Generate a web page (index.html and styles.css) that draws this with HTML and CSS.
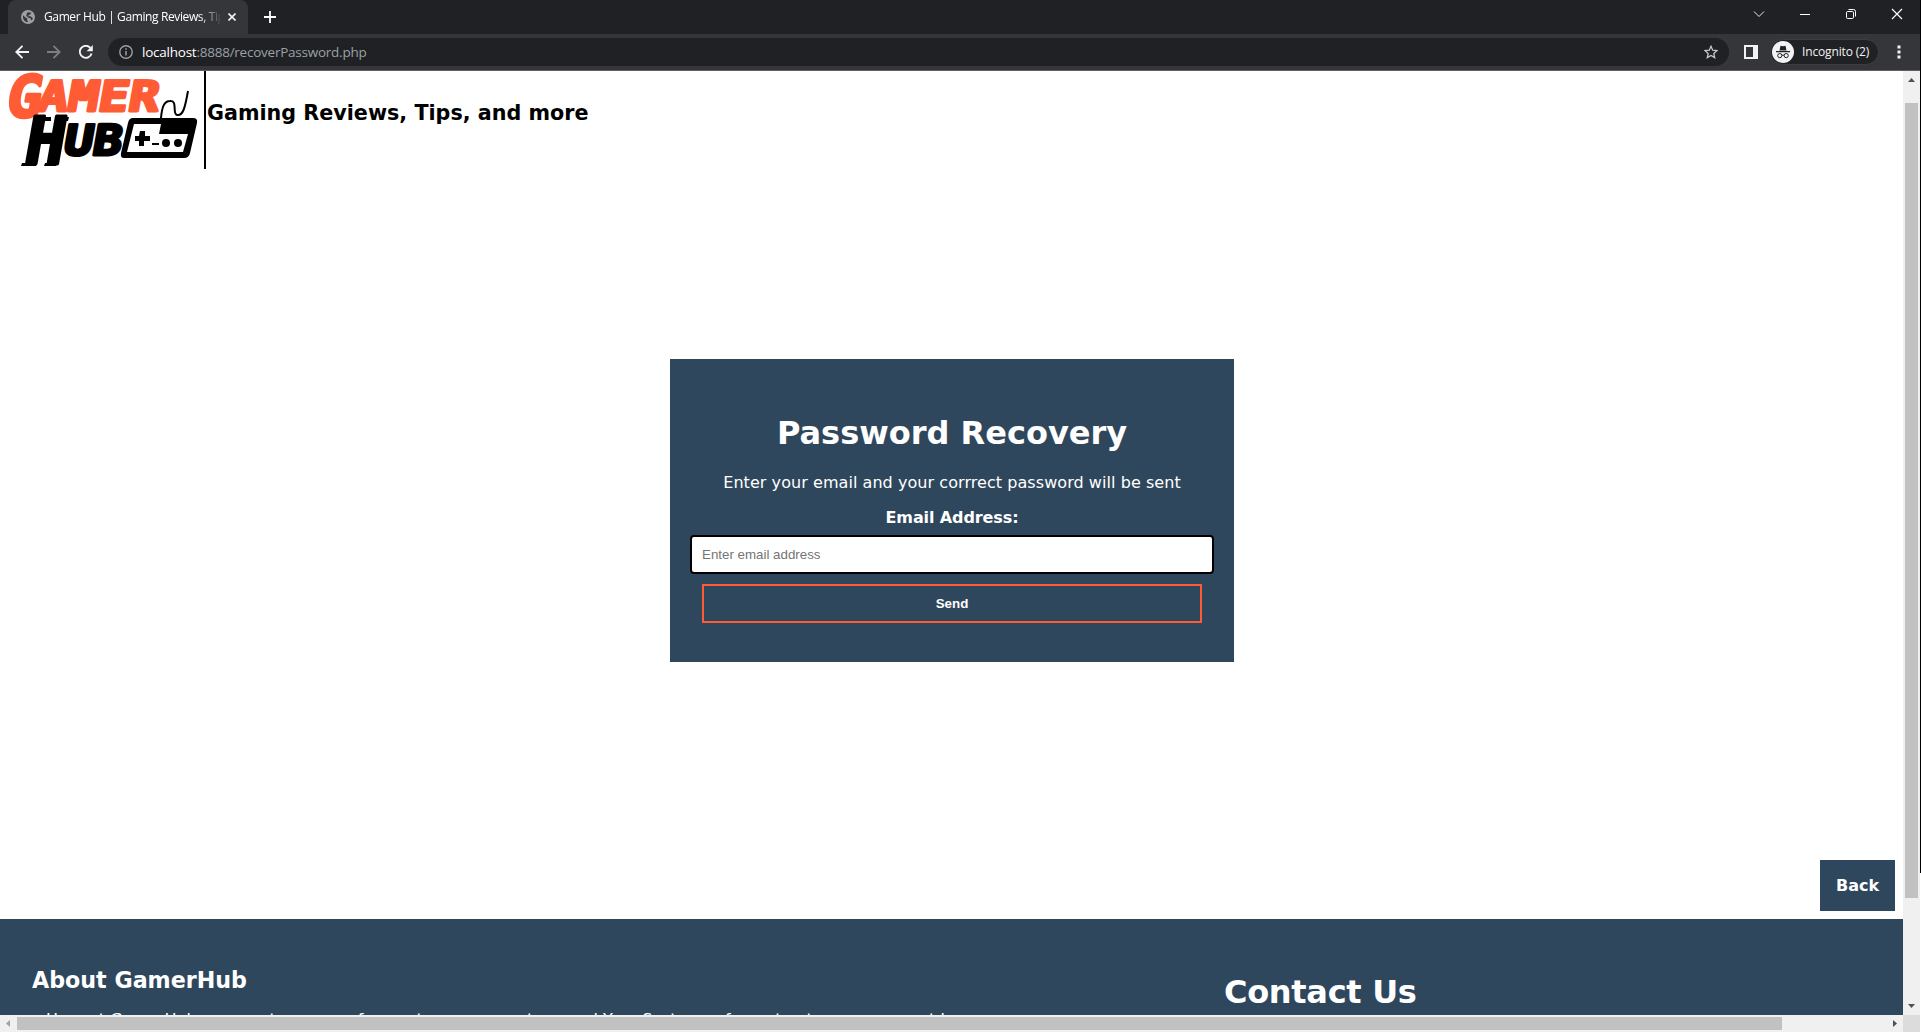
FILE: index.html
```html
<!DOCTYPE html>
<html lang="en">
<head>
<meta charset="utf-8">
<title>Gamer Hub | Gaming Reviews, Tips, and more</title>
<link rel="stylesheet" href="styles.css">
</head>
<body>
<div class="window">
  <div class="tabstrip">
    <div class="tab">
      <svg class="globe" width="14" height="14" viewBox="0 0 14 14"><circle cx="7" cy="7" r="7" fill="#9aa0a6"/><path d="M2 5.2L5 8l1.2.3v2.4L7.3 12C4 12.400 1.500 9.500 2 5.200zM6.300 2.200l4.200.5L9 4.400 7.500 5.500 6 6.200h3.500L12 8.500 10.500 10.500 9.300 8.300 7 7.500 5.200 6z" fill="#35363a"/></svg>
      <span class="tab-title">Gamer Hub | Gaming Reviews, Tip</span>
      <svg class="tab-close" width="8" height="8" viewBox="0 0 8 8"><path d="M.5.5l7 7M7.500.5l-7 7" stroke="#f1f3f4" stroke-width="1.600"/></svg>
    </div>
    <svg class="newtab" width="12" height="12" viewBox="0 0 12 12"><path d="M6 0v12M0 6h12" stroke="#fff" stroke-width="1.800"/></svg>
    <div class="controls">
      <svg width="12" height="12" viewBox="0 0 12 12"><path d="M1 3.500l5 5 5-5" fill="none" stroke="#e8eaed"/></svg>
      <svg width="12" height="12" viewBox="0 0 12 12"><path d="M1 6.500h10" stroke="#fff"/></svg>
      <svg width="12" height="12" viewBox="0 0 12 12"><rect x="1.500" y="3.500" width="7" height="7" rx="1.200" fill="none" stroke="#fff"/><path d="M3.500 1.500h5q2 0 2 2v5" fill="none" stroke="#fff"/></svg>
      <svg width="12" height="12" viewBox="0 0 12 12"><path d="M1 1l10 10M11 1L1 11" stroke="#fff" stroke-width="1.200"/></svg>
    </div>
  </div>
  <div class="toolbar">
    <svg class="nav" width="14" height="14" viewBox="0 0 14 14"><path d="M14 7H1.500M7.500.8L1.300 7l6.200 6.200" fill="none" stroke="#f1f3f4" stroke-width="1.800"/></svg>
    <svg class="nav" width="14" height="14" viewBox="0 0 14 14"><path d="M0 7h12.500M6.500.8L12.700 7l-6.200 6.200" fill="none" stroke="#7d7e82" stroke-width="1.800"/></svg>
    <svg class="nav" width="14" height="14" viewBox="0 0 14 14"><path d="M12.600 8.500A6 6 0 1 1 11.300 2.800" fill="none" stroke="#f1f3f4" stroke-width="1.900"/><path d="M13.800 0v6.200H7.600z" fill="#f1f3f4"/></svg>
    <div class="address">
      <svg width="14" height="14" viewBox="0 0 14 14"><circle cx="7" cy="7" r="6.200" fill="none" stroke="#9aa0a6" stroke-width="1.400"/><path d="M7 6v4.500M7 3.300v1.500" stroke="#9aa0a6" stroke-width="1.500"/></svg>
      <span class="url"><b>localhost</b>:8888/recoverPassword.php</span>
      <svg class="star" width="14" height="14" viewBox="0 0 14 14"><path d="M7 1.300l1.700 3.900 4.300.4-3.200 2.800.9 4.200L7 10.400l-3.700 2.200.9-4.200L1 5.600l4.300-.4z" fill="none" stroke="#c4c7ca" stroke-width="1.300"/></svg>
    </div>
    <svg class="panel" width="14" height="14" viewBox="0 0 14 14"><path fill-rule="evenodd" d="M0 0h14v14H0zM2 2v10h7V2z" fill="#f1f3f4"/></svg>
    <div class="incognito">
      <svg width="22" height="22" viewBox="0 0 22 22"><circle cx="11" cy="11" r="11" fill="#f1f3f4"/><path d="M7.500 9.500l1-4.700q2.500.8 5 0l1 4.700zM4 10h14v1.200H4z" fill="#202124"/><g fill="none" stroke="#202124"><circle cx="7.800" cy="14.600" r="2.100"/><circle cx="14.200" cy="14.600" r="2.100"/><path d="M9.900 14.200h2.200"/></g></svg>
      <span>Incognito (2)</span>
    </div>
    <svg class="dots" width="4" height="14" viewBox="0 0 4 14"><path d="M.5.5h3v3h-3zM.5 5.500h3v3h-3zM.5 10.500h3v3h-3z" fill="#f1f3f4"/></svg>
  </div>
  <div class="viewport">
    <div class="page">
      <header class="site-header">
        <svg class="logo" width="204" height="98" viewBox="0 0 204 98">
          <g class="logo-orange">
            <text transform="translate(4 46) skewX(-10)" font-size="58" textLength="35" lengthAdjust="spacingAndGlyphs">G</text>
            <text transform="translate(36 40) skewX(-10)" font-size="42" textLength="121" lengthAdjust="spacingAndGlyphs">AMER</text>
          </g>
          <g class="logo-black">
            <text transform="translate(22 93) skewX(-10)" font-size="66" textLength="40" lengthAdjust="spacingAndGlyphs">H</text>
            <text transform="translate(62 84) skewX(-10)" font-size="42" textLength="58" lengthAdjust="spacingAndGlyphs">UB</text>
          </g>
          <path d="M22 92h15l-1 3H21zM45 92h12l-1 3H44zM37 46h14v4H36zM58 46h11l-1 4H57z" fill="#000"/>
          <path d="M161 47c1-11 3-17 9-17 8-1 2 13 7 14 6 1 8-7 11-24" fill="none" stroke="#000" stroke-width="2"/>
          <path fill-rule="evenodd" d="M133 47h60q5 0 4 5l-7 30q-1 5-6 5h-60q-4 0-3-5l7-30q1-5 5-5zM134 53l-7 28h56l5-18h-29l2-10z" fill="#000"/>
          <path d="M140 60h5v5h5v5h-6v5h-5v-5h-4v-5h4zM152 72h7v2h-7z" fill="#000"/>
          <circle cx="166" cy="72" r="4"/><circle cx="178" cy="72" r="4"/>
        </svg>
        <h2 class="tagline">Gaming Reviews, Tips, and more</h2>
      </header>
      <main class="main">
        <form class="card">
          <h1>Password Recovery</h1>
          <p>Enter your email and your corrrect password will be sent</p>
          <label for="email">Email Address:</label>
          <input id="email" type="text" placeholder="Enter email address">
          <button type="button">Send</button>
        </form>
      </main>
      <div class="back-row"><a class="back">Back</a></div>
      <footer class="footer">
        <section class="about">
          <h3>About GamerHub</h3>
          <p>Here at GamerHub, we create a space for our top game centres, and Your Systems of event out our game next home</p>
        </section>
        <section class="contact"><h1>Contact Us</h1></section>
      </footer>
    </div>
    <div class="vbar"><svg width="17" height="17"><path d="M5 11h7L8.500 7z" fill="#505050"/></svg><i></i><svg width="17" height="17"><path d="M5 6h7l-3.500 4z" fill="#505050"/></svg></div>
    <div class="hbar"><svg width="17" height="17"><path d="M10 5v7L6 8.500z" fill="#a3a3a3"/></svg><i></i><svg width="17" height="17"><path d="M7 5v7l4-3.500z" fill="#505050"/></svg></div>
    <div class="corner"></div>
  </div>
</div>
</body>
</html>
```
FILE: styles.css
```css
* { box-sizing: border-box; }
body { margin: 0; overflow: hidden; background: #000; font-family: "DejaVu Sans", Verdana, sans-serif; }
svg { display: block; flex: none; }
.window { width: 1921px; height: 1032px; display: flex; flex-direction: column; background: linear-gradient(#000 873px, #fff 873px); }
.tabstrip { width: 1920px; height: 34px; background: #202124; display: flex; align-items: flex-start; padding-left: 8px; }
.tab { width: 240px; height: 34px; background: #35363a; border-radius: 8px 8px 0 0; display: flex; align-items: center; padding: 0 12px 0 13px; }
.tab-title { width: 176px; margin: -2px 0 0 9px; overflow: hidden; white-space: nowrap; font: 12px "Open Sans", sans-serif; letter-spacing: -0.38px; color: #fff; -webkit-mask-image: linear-gradient(90deg, #000 155px, transparent 178px); mask-image: linear-gradient(90deg, #000 155px, transparent 178px); }
.tab-close { margin-left: 8px; }
.newtab { margin: 11px 0 0 16px; }
.controls { margin: 8px 17px 0 auto; display: flex; gap: 34px; }
.toolbar { width: 1920px; height: 37px; flex: none; background: #35363a; border-bottom: 1px solid #5f5e62; display: flex; align-items: center; padding-left: 15px; }
.nav { margin-right: 18px; }
.address { width: 1621px; height: 28px; margin-left: -3px; border-radius: 14px; background: #202124; display: flex; align-items: center; padding: 0 11px; }
.url { margin: -1px 0 0 9px; font: 13.5px "Open Sans", sans-serif; color: #9aa0a6; letter-spacing: -0.24px; }
.url b { font-weight: 400; color: #fff; }
.star { margin-left: auto; }
.panel { margin-left: 15px; }
.incognito { width: 109px; height: 26px; margin-left: 12px; border: 1px solid #3c3d41; border-radius: 13px; background: #202124; display: flex; align-items: center; padding-left: 1px; font: 12px "Open Sans", sans-serif; letter-spacing: -0.15px; color: #f1f3f4; gap: 8px; white-space: nowrap; }
.incognito span { margin-top: -1px; }
.dots { margin-left: 18px; }
.viewport { width: 1920px; height: 961px; display: grid; grid-template: 944px 17px / 1903px 17px; }
.page { overflow: hidden; background: #fff; display: flex; flex-direction: column; }
.site-header { height: 98px; display: flex; }
.logo { width: 204px; }
.logo text { font-family: "DejaVu Sans Mono", monospace; font-weight: 700; stroke-width: 3; stroke-linejoin: round; }
.logo-orange { fill: #ff5c35; stroke: #ff5c35; }
.logo-black { fill: #000; stroke: #000; }
.tagline { margin: 0; border-left: 2px solid #000; padding: 28px 0 0 1px; font-size: 20.7px; line-height: 28px; }
.main { padding: 190px 0 0 670px; height: 691px; flex: none; }
.card { width: 564px; height: 303px; background: #2f475d; color: #fff; padding: 54px 18px 0; display: flex; flex-direction: column; align-items: center; white-space: nowrap; }
.card h1 { margin: 0; font-size: 32px; line-height: 40px; }
.card p { margin: 20px 0 0; font-size: 16px; line-height: 20px; letter-spacing: 0.06px; }
.card label { margin-top: 15px; font-size: 16px; font-weight: 700; line-height: 20px; letter-spacing: -0.1px; }
.card input { width: 524px; height: 39px; margin-top: 7px; flex: none; border: 2px solid #000; border-radius: 4px; padding: 0 10px; font: 13.333px "Liberation Sans", Arial, sans-serif; background: #fff; }
.card input::placeholder { color: #757575; }
.card button { width: 500px; height: 39px; margin-top: 10px; flex: none; border: 2px solid #ff5c35; background: #2f475d; color: #fff; font: 700 13.333px "Liberation Sans", Arial, sans-serif; }
.back-row { height: 59px; flex: none; display: flex; justify-content: flex-end; padding-right: 8px; }
.back { width: 75px; height: 51px; background: #2f475d; color: #fff; font-size: 16px; font-weight: 700; line-height: 52px; text-align: center; }
.footer { height: 96px; flex: none; background: #2f475d; color: #fff; display: grid; grid-template-columns: 1192px 1fr; padding-left: 32px; white-space: nowrap; }
.about h3 { margin: 47px 0 0; font-size: 22.200px; line-height: 28px; }
.about p { margin: 16px 0 0 14px; font-size: 16px; line-height: 20px; }
.contact h1 { margin: 53px 0 0; font-size: 32px; line-height: 40px; letter-spacing: -0.3px; }
.vbar { background: #f0f0f0; display: flex; flex-direction: column; align-items: center; }
.vbar i { width: 13px; height: 795px; margin: 15px 0 auto; background: #c1c1c1; }
.hbar { background: #f0f0f0; display: flex; align-items: center; }
.hbar i { width: 1765px; height: 13px; margin-right: auto; background: #c1c1c1; }
.corner { background: #dcdcdc; }
```
